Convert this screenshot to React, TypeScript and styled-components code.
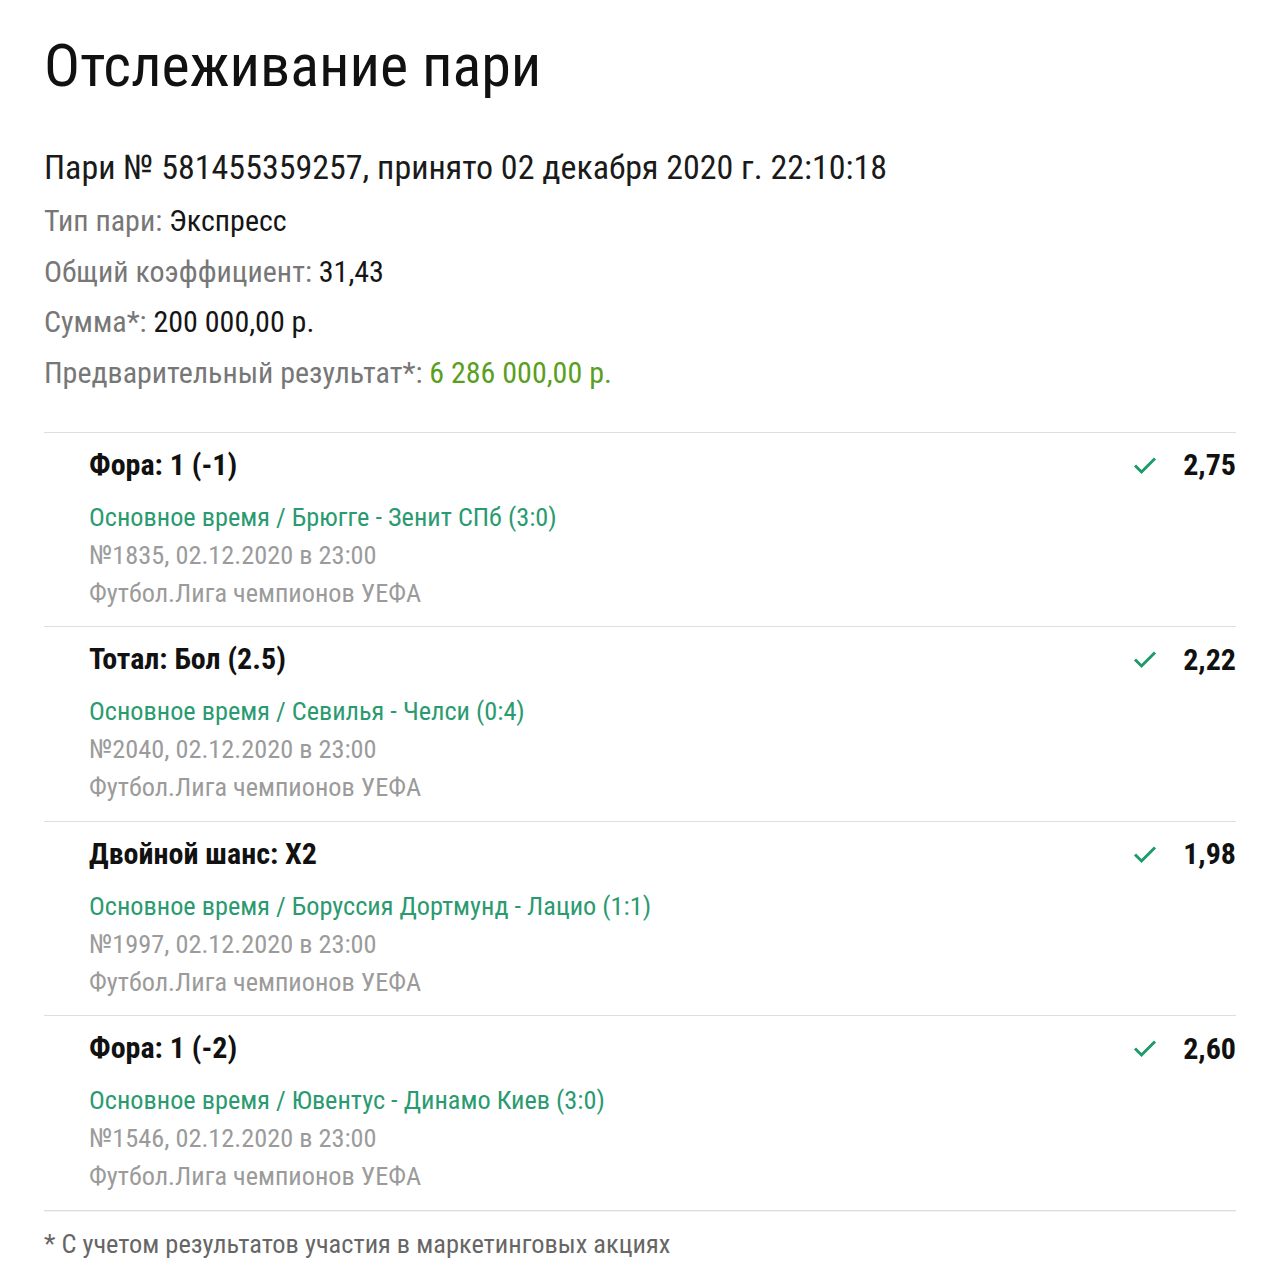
import React from "react";
import styled, { createGlobalStyle } from "styled-components";

const GlobalStyle = createGlobalStyle`
  body {
    margin: 0;
    background: #fff;
    font-family: Roboto, "Liberation Sans", sans-serif;
    font-stretch: condensed;
    color: #111;
  }
`;

const Page = styled.div`
  padding: 30px 44px 30px 44px;
`;

const Title = styled.h1`
  margin: 0;
  font-size: 60px;
  line-height: 72px;
  font-weight: 400;
  color: #111;
`;

const BetHeader = styled.div`
  margin-top: 43px;
  font-size: 34px;
  line-height: 44px;
  color: #1a1a1a;
`;

const Details = styled.div`
  margin-top: 7px;
  margin-bottom: 33px;
`;

const DetailRow = styled.div`
  font-size: 30px;
  line-height: 50.7px;
  color: #777;
`;

const Value = styled.span<{ $accent?: boolean }>`
  color: ${({ $accent }) => ($accent ? "#5b9f22" : "#151515")};
`;

const EventList = styled.div`
  border-bottom: 1px solid #dedede;
  box-shadow: 0 1px 0 #f3f3f3;
`;

const EventRow = styled.div`
  display: flex;
  align-items: flex-start;
  justify-content: space-between;
  border-top: 1px solid #dedede;
  padding: 12px 0 14.5px 45px;
`;

const EventInfo = styled.div`
  display: flex;
  flex-direction: column;
`;

const Market = styled.div`
  font-size: 30px;
  line-height: 40px;
  font-weight: 700;
  color: #111;
  margin-bottom: 13px;
`;

const Match = styled.div`
  font-size: 26.3px;
  line-height: 38px;
  color: #2a9a70;
`;

const Meta = styled.div`
  font-size: 26.3px;
  line-height: 38px;
  color: #9b9b9b;
`;

const OddsBox = styled.div`
  display: flex;
  align-items: center;
  gap: 26px;
  height: 40px;
`;

const Odds = styled.span`
  font-size: 30px;
  font-weight: 700;
  color: #111;
`;

const CheckIcon = styled.svg`
  width: 24px;
  height: 20px;
  color: #1e9a6c;
`;

const Footnote = styled.div`
  margin-top: 13px;
  font-size: 26.4px;
  line-height: 40px;
  color: #666;
`;

interface Event {
  market: string;
  match: string;
  number: string;
  league: string;
  odds: string;
}

const events: Event[] = [
  {
    market: "Фора: 1 (-1)",
    match: "Основное время / Брюгге - Зенит СПб (3:0)",
    number: "№1835, 02.12.2020 в 23:00",
    league: "Футбол.Лига чемпионов УЕФА",
    odds: "2,75",
  },
  {
    market: "Тотал: Бол (2.5)",
    match: "Основное время / Севилья - Челси (0:4)",
    number: "№2040, 02.12.2020 в 23:00",
    league: "Футбол.Лига чемпионов УЕФА",
    odds: "2,22",
  },
  {
    market: "Двойной шанс: X2",
    match: "Основное время / Боруссия Дортмунд - Лацио (1:1)",
    number: "№1997, 02.12.2020 в 23:00",
    league: "Футбол.Лига чемпионов УЕФА",
    odds: "1,98",
  },
  {
    market: "Фора: 1 (-2)",
    match: "Основное время / Ювентус - Динамо Киев (3:0)",
    number: "№1546, 02.12.2020 в 23:00",
    league: "Футбол.Лига чемпионов УЕФА",
    odds: "2,60",
  },
];

const Check = () => (
  <CheckIcon viewBox="0 0 24 20" fill="none">
    <path
      d="M2 10.5 L8.5 17 L22 3.5"
      stroke="currentColor"
      strokeWidth="3"
      strokeLinecap="butt"
      strokeLinejoin="miter"
    />
  </CheckIcon>
);

export default function App() {
  return (
    <>
      <GlobalStyle />
      <Page>
        <Title>Отслеживание пари</Title>
        <BetHeader>Пари № 581455359257, принято 02 декабря 2020 г. 22:10:18</BetHeader>
        <Details>
          <DetailRow>
            Тип пари: <Value>Экспресс</Value>
          </DetailRow>
          <DetailRow>
            Общий коэффициент: <Value>31,43</Value>
          </DetailRow>
          <DetailRow>
            Сумма*: <Value>200 000,00 р.</Value>
          </DetailRow>
          <DetailRow>
            Предварительный результат*: <Value $accent>6 286 000,00 р.</Value>
          </DetailRow>
        </Details>
        <EventList>
          {events.map((e) => (
            <EventRow key={e.number}>
              <EventInfo>
                <Market>{e.market}</Market>
                <Match>{e.match}</Match>
                <Meta>{e.number}</Meta>
                <Meta>{e.league}</Meta>
              </EventInfo>
              <OddsBox>
                <Check />
                <Odds>{e.odds}</Odds>
              </OddsBox>
            </EventRow>
          ))}
        </EventList>
        <Footnote>* С учетом результатов участия в маркетинговых акциях</Footnote>
      </Page>
    </>
  );
}
